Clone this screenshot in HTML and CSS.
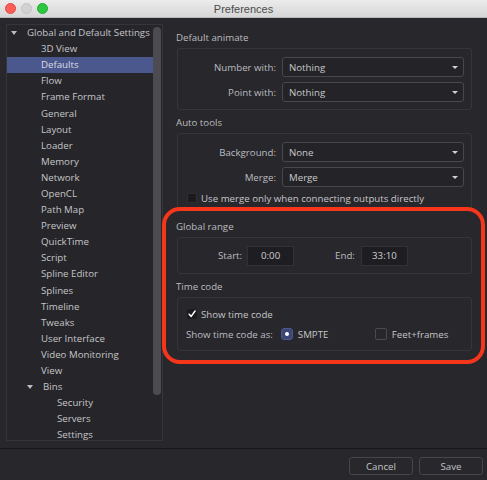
FILE: index.html
```html
<!DOCTYPE html>
<html>
<head>
<meta charset="utf-8">
<link rel="stylesheet" href="styles.css">
</head>
<body>
<div class="window">
  <div class="titlebar">
    <div class="lights">
      <span class="light red"></span>
      <span class="light gray"></span>
      <span class="light green"></span>
    </div>
    <div class="title">Preferences</div>
  </div>
  <div class="main">
    <div class="tree">
      <div class="tree-list">
        <div class="row lvl0"><span class="tri"></span>Global and Default Settings</div>
        <div class="row lvl1">3D View</div>
        <div class="row lvl1 selected">Defaults</div>
        <div class="row lvl1">Flow</div>
        <div class="row lvl1">Frame Format</div>
        <div class="row lvl1">General</div>
        <div class="row lvl1">Layout</div>
        <div class="row lvl1">Loader</div>
        <div class="row lvl1">Memory</div>
        <div class="row lvl1">Network</div>
        <div class="row lvl1">OpenCL</div>
        <div class="row lvl1">Path Map</div>
        <div class="row lvl1">Preview</div>
        <div class="row lvl1">QuickTime</div>
        <div class="row lvl1">Script</div>
        <div class="row lvl1">Spline Editor</div>
        <div class="row lvl1">Splines</div>
        <div class="row lvl1">Timeline</div>
        <div class="row lvl1">Tweaks</div>
        <div class="row lvl1">User Interface</div>
        <div class="row lvl1">Video Monitoring</div>
        <div class="row lvl1">View</div>
        <div class="row lvl1b"><span class="tri"></span>Bins</div>
        <div class="row lvl2">Security</div>
        <div class="row lvl2">Servers</div>
        <div class="row lvl2">Settings</div>
      </div>
      <div class="scroll-track"><div class="scroll-thumb"></div></div>
    </div>
    <div class="settings">
      <div class="section-label first">Default animate</div>
      <div class="group g-animate">
        <div class="field">
          <span class="flabel">Number with:</span>
          <div class="combo"><span>Nothing</span><span class="arrow"></span></div>
        </div>
        <div class="field">
          <span class="flabel">Point with:</span>
          <div class="combo"><span>Nothing</span><span class="arrow"></span></div>
        </div>
      </div>
      <div class="section-label">Auto tools</div>
      <div class="group g-auto">
        <div class="field">
          <span class="flabel">Background:</span>
          <div class="combo"><span>None</span><span class="arrow"></span></div>
        </div>
        <div class="field">
          <span class="flabel">Merge:</span>
          <div class="combo"><span>Merge</span><span class="arrow"></span></div>
        </div>
        <div class="check-row merge-row">
          <span class="cbox small"></span>
          <span>Use merge only when connecting outputs directly</span>
        </div>
      </div>
      <div class="section-label gr">Global range</div>
      <div class="group g-range">
        <span class="rlabel start">Start:</span>
        <span class="tinput">0:00</span>
        <span class="rlabel end">End:</span>
        <span class="tinput">33:10</span>
      </div>
      <div class="section-label">Time code</div>
      <div class="group g-time">
        <div class="check-row">
          <span class="cbox small checked">
            <svg width="10" height="10" viewBox="0 0 10 10"><path d="M1.5 5.2 L4 8 L8.8 1.2" fill="none" stroke="#fff" stroke-width="1.8" stroke-linecap="round" stroke-linejoin="round"/></svg>
          </span>
          <span>Show time code</span>
        </div>
        <div class="tc-row">
          <span class="tc-label">Show time code as:</span>
          <span class="radio on"><span class="dot"></span></span>
          <span class="opt smpte">SMPTE</span>
          <span class="cbox big"></span>
          <span class="opt">Feet+frames</span>
        </div>
      </div>
    </div>
  </div>
  <div class="footer">
    <div class="btn">Cancel</div>
    <div class="btn">Save</div>
  </div>
  <div class="annotation"></div>
</div>
</body>
</html>
```

FILE: styles.css
```css
* { box-sizing: border-box; }
html, body { margin: 0; padding: 0; background: #27272c; }
body {
  font-family: "Open Sans", "DejaVu Sans", sans-serif;
  font-size: 9.7px;
  color: #c4c4c6;
}
.window {
  position: relative;
  width: 487px;
  height: 480px;
  background: #27272c;
  overflow: hidden;
}
.titlebar {
  position: relative;
  height: 18px;
  background: linear-gradient(#ececec, #d6d6d6);
  border-bottom: 1px solid #b8b8b8;
  display: flex;
  align-items: center;
  justify-content: center;
}
.lights {
  position: absolute;
  left: 5px;
  top: 3px;
  display: flex;
  gap: 5px;
}
.light {
  width: 11px;
  height: 11px;
  border-radius: 50%;
  display: block;
}
.light.red { background: #fc5f57; border: 1px solid #e2463f; }
.light.gray { background: #d2d2d2; border: 1px solid #c2c2c2; }
.light.green { background: #2dc641; border: 1px solid #1fab2f; }
.title {
  font-family: "Liberation Sans", "Open Sans", sans-serif;
  font-size: 11px;
  color: #4b4b4b;
  margin-top: 1px;
}
.main {
  display: flex;
  height: 430px;
}
.tree {
  position: relative;
  margin: 6px 0 0 6px;
  width: 157px;
  height: 417px;
  background: #25252a;
  border: 1px solid #35353b;
  display: flex;
}
.tree-list {
  width: 146px;
  display: flex;
  flex-direction: column;
}
.row {
  height: 16.1px;
  line-height: 16px;
  white-space: nowrap;
  display: flex;
  align-items: center;
  color: #c6c6c8;
  flex-shrink: 0;
}
.row.lvl0 { padding-left: 4px; }
.row.lvl1 { padding-left: 34px; }
.row.lvl1b { padding-left: 20px; }
.row.lvl2 { padding-left: 50px; }
.row.selected { background: #4a588d; color: #dcdde4; }
.tri {
  width: 0; height: 0;
  border-left: 3px solid transparent;
  border-right: 3px solid transparent;
  border-top: 4px solid #bdbdc0;
  margin-right: 10px;
}
.scroll-track {
  width: 9px;
  padding-top: 2px;
}
.scroll-thumb {
  width: 8px;
  height: 368px;
  border-radius: 4px;
  background: #4b4b51;
}
.settings {
  flex: 1;
  padding-left: 13px;
  padding-right: 15px;
  display: flex;
  flex-direction: column;
}
.section-label {
  height: 16px;
  line-height: 16px;
  margin-top: 5px;
  margin-bottom: 2px;
  color: #bcbcbf;
}
.section-label.first { margin-top: 12px; }
.section-label.gr { margin-top: 9px; }
.group {
  margin-left: 1px;
  border: 1px solid #35353b;
  border-radius: 3px;
}
.g-animate { height: 62px; padding: 8px 7px 0 0; display: flex; flex-direction: column; gap: 5px; }
.g-auto { height: 77px; padding: 8px 7px 0 0; display: flex; flex-direction: column; gap: 5px; }
.field {
  display: flex;
  align-items: center;
  height: 20px;
}
.flabel {
  width: 98px;
  text-align: right;
  margin-right: 6px;
  color: #bdbdc0;
}
.combo {
  flex: 1;
  height: 20px;
  border: 1px solid #47474d;
  border-radius: 3px;
  background: #242428;
  display: flex;
  align-items: center;
  justify-content: space-between;
  padding: 0 5px 0 6px;
  color: #c8c8ca;
}
.arrow {
  width: 0; height: 0;
  border-left: 3px solid transparent;
  border-right: 3px solid transparent;
  border-top: 3px solid #d0d0d2;
}
.check-row {
  display: flex;
  align-items: center;
  padding-left: 9px;
  height: 14px;
  color: #c6c6c8;
  white-space: nowrap;
}
.merge-row { margin-top: -1px; }
.cbox {
  display: inline-flex;
  align-items: center;
  justify-content: center;
  border-radius: 2px;
  flex-shrink: 0;
}
.cbox.small {
  width: 10px;
  height: 10px;
  background: #1b1b1e;
  border: 1px solid #2f2f34;
  margin-right: 4px;
}
.cbox.small.checked {
  background: #1b1b1e;
  border-color: #1b1b1e;
}
.cbox.small svg { display: block; }
.cbox.big {
  width: 12px;
  height: 12px;
  border: 1px solid #4a4a50;
  background: #27272c;
  margin-right: 5px;
}
.g-range {
  height: 37px;
  display: flex;
  align-items: center;
  padding-left: 40px;
}
.rlabel { color: #bdbdc0; }
.rlabel.start { margin-right: 5px; }
.rlabel.end { margin-left: 41px; margin-right: 6px; }
.tinput {
  width: 47px;
  height: 20px;
  background: #1e1e22;
  border: 1px solid #313136;
  display: flex;
  align-items: center;
  justify-content: center;
  color: #cfcfd1;
}
.g-time {
  height: 54px;
  padding-top: 9px;
  display: flex;
  flex-direction: column;
  gap: 6px;
}
.tc-row {
  display: flex;
  align-items: center;
  padding-left: 8px;
  height: 14px;
  white-space: nowrap;
}
.tc-label { color: #bdbdc0; margin-right: 8px; flex-shrink: 0; }
.radio {
  width: 12px;
  height: 12px;
  border-radius: 3px;
  background: #3c4775;
  border: 1px solid #4c5889;
  display: inline-flex;
  align-items: center;
  justify-content: center;
  margin-right: 5px;
  flex-shrink: 0;
}
.radio .dot {
  width: 4px; height: 4px; border-radius: 50%; background: #ffffff;
}
.opt { color: #c6c6c8; }
.opt.smpte { width: 77px; flex-shrink: 0; }
.footer {
  border-top: 1px solid #17171a;
  height: 32px;
  display: flex;
  justify-content: flex-end;
  align-items: flex-start;
  gap: 6px;
  padding: 8px 4px 0 0;
}
.btn {
  width: 64px;
  height: 18px;
  border: 1px solid #45454b;
  border-radius: 3px;
  display: flex;
  align-items: center;
  justify-content: center;
  color: #c4c4c6;
}
.annotation {
  position: absolute;
  left: 162px;
  top: 207px;
  width: 323px;
  height: 157px;
  border: 4px solid #f5361b;
  border-radius: 18px;
  pointer-events: none;
}
```
